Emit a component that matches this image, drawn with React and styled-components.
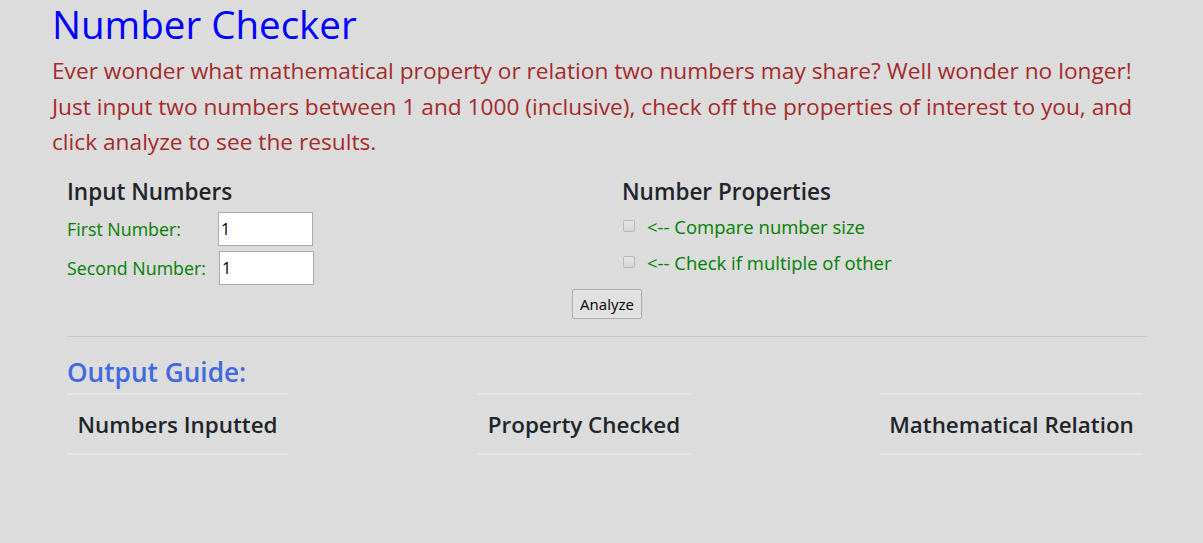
import styled, { createGlobalStyle } from "styled-components";

const GlobalStyle = createGlobalStyle`
  html, body {
    margin: 0;
    padding: 0;
    background: #dcdcdc;
    font-family: "Open Sans", "Noto Sans", sans-serif;
    color: #212529;
  }
`;

const Page = styled.div`
  width: 1110px;
  margin-left: 52px;
  padding-top: 3px;
  min-height: 540px;
`;

const Title = styled.h1`
  margin: 0;
  font-size: 38.5px;
  font-weight: 400;
  line-height: 42px;
  color: #0000ff;
`;

const Intro = styled.p`
  margin: 8px 0 0;
  font-size: 22.7px;
  line-height: 35.7px;
  color: #a52a2a;
`;

const Row = styled.div`
  display: grid;
  grid-template-columns: 1fr 1fr;
  margin-top: 17px;
`;

const Col = styled.div`
  padding: 0 15px;
`;

const Heading = styled.h4`
  margin: 0 0 6px;
  font-size: 22.5px;
  font-weight: 600;
  line-height: 29px;
  color: #212529;
`;

const Field = styled.div`
  display: flex;
  align-items: center;
  margin-bottom: 5px;
`;

const Label = styled.label`
  width: ${({ $w }) => $w}px;
  font-size: 17.8px;
  color: #008000;
`;

const NumberInput = styled.input`
  box-sizing: border-box;
  width: 95px;
  height: 34px;
  border: 1px solid #ababab;
  background: #fff;
  padding: 0 2px;
  font-family: "Open Sans", sans-serif;
  font-size: 16px;
  color: #000;
  outline: none;
`;

const Check = styled.div`
  display: flex;
  align-items: center;
  height: 36px;
  margin-top: ${({ $top }) => $top || 0}px;
`;

const Box = styled.span`
  box-sizing: border-box;
  width: 12px;
  height: 12px;
  margin-left: 1px;
  margin-right: 12px;
  border: 1px solid #b8b8b8;
  border-radius: 2px;
  background: linear-gradient(#e6e6e6, #d6d6d6);
`;

const CheckText = styled.span`
  font-size: 18.5px;
  color: #008000;
`;

const Actions = styled.div`
  display: flex;
  justify-content: center;
  margin-top: -1px;
`;

const Button = styled.button`
  height: 30px;
  padding: 0 7px;
  border: 1px solid #adadad;
  border-radius: 2px;
  background: #e1e1e1;
  font-family: "Open Sans", sans-serif;
  font-size: 15px;
  color: #000;
`;

const Rule = styled.hr`
  margin: 17px 15px 0;
  border: 0;
  border-top: 1px solid #c6c6c6;
`;

const Guide = styled.div`
  padding: 0 15px;
`;

const GuideTitle = styled.h3`
  margin: 19px 0 5px;
  font-size: 26.2px;
  font-weight: 600;
  line-height: 32px;
  color: #4169e1;
`;

const Cells = styled.div`
  display: flex;
  justify-content: space-between;
  padding-right: 4px;
`;

const Cell = styled.div`
  width: ${({ $w }) => $w}px;
  box-sizing: border-box;
  height: 62px;
  border-top: 2px solid #e3e5e9;
  border-bottom: 2px solid #e3e5e9;
  display: flex;
  align-items: center;
  justify-content: center;
  white-space: nowrap;
  font-size: 22.4px;
  font-weight: 600;
  color: #212529;
`;

export default function App() {
  return (
    <>
      <GlobalStyle />
      <Page>
        <Title>Number Checker</Title>
        <Intro>
          Ever wonder what mathematical property or relation two numbers may
          share? Well wonder no longer! Just input two numbers between 1 and
          1000 (inclusive), check off the properties of interest to you, and
          click analyze to see the results.
        </Intro>
        <Row>
          <Col>
            <Heading>Input Numbers</Heading>
            <Field>
              <Label $w={151}>First Number:</Label>
              <NumberInput type="text" defaultValue="1" />
            </Field>
            <Field>
              <Label $w={152}>Second Number:</Label>
              <NumberInput type="text" defaultValue="1" />
            </Field>
          </Col>
          <Col>
            <Heading>Number Properties</Heading>
            <Check $top={-4}>
              <Box />
              <CheckText>&lt;-- Compare number size</CheckText>
            </Check>
            <Check>
              <Box />
              <CheckText>&lt;-- Check if multiple of other</CheckText>
            </Check>
          </Col>
        </Row>
        <Actions>
          <Button>Analyze</Button>
        </Actions>
        <Rule />
        <Guide>
          <GuideTitle>Output Guide:</GuideTitle>
          <Cells>
            <Cell $w={221}>Numbers Inputted</Cell>
            <Cell $w={215}>Property Checked</Cell>
            <Cell $w={263}>Mathematical Relation</Cell>
          </Cells>
        </Guide>
      </Page>
    </>
  );
}
